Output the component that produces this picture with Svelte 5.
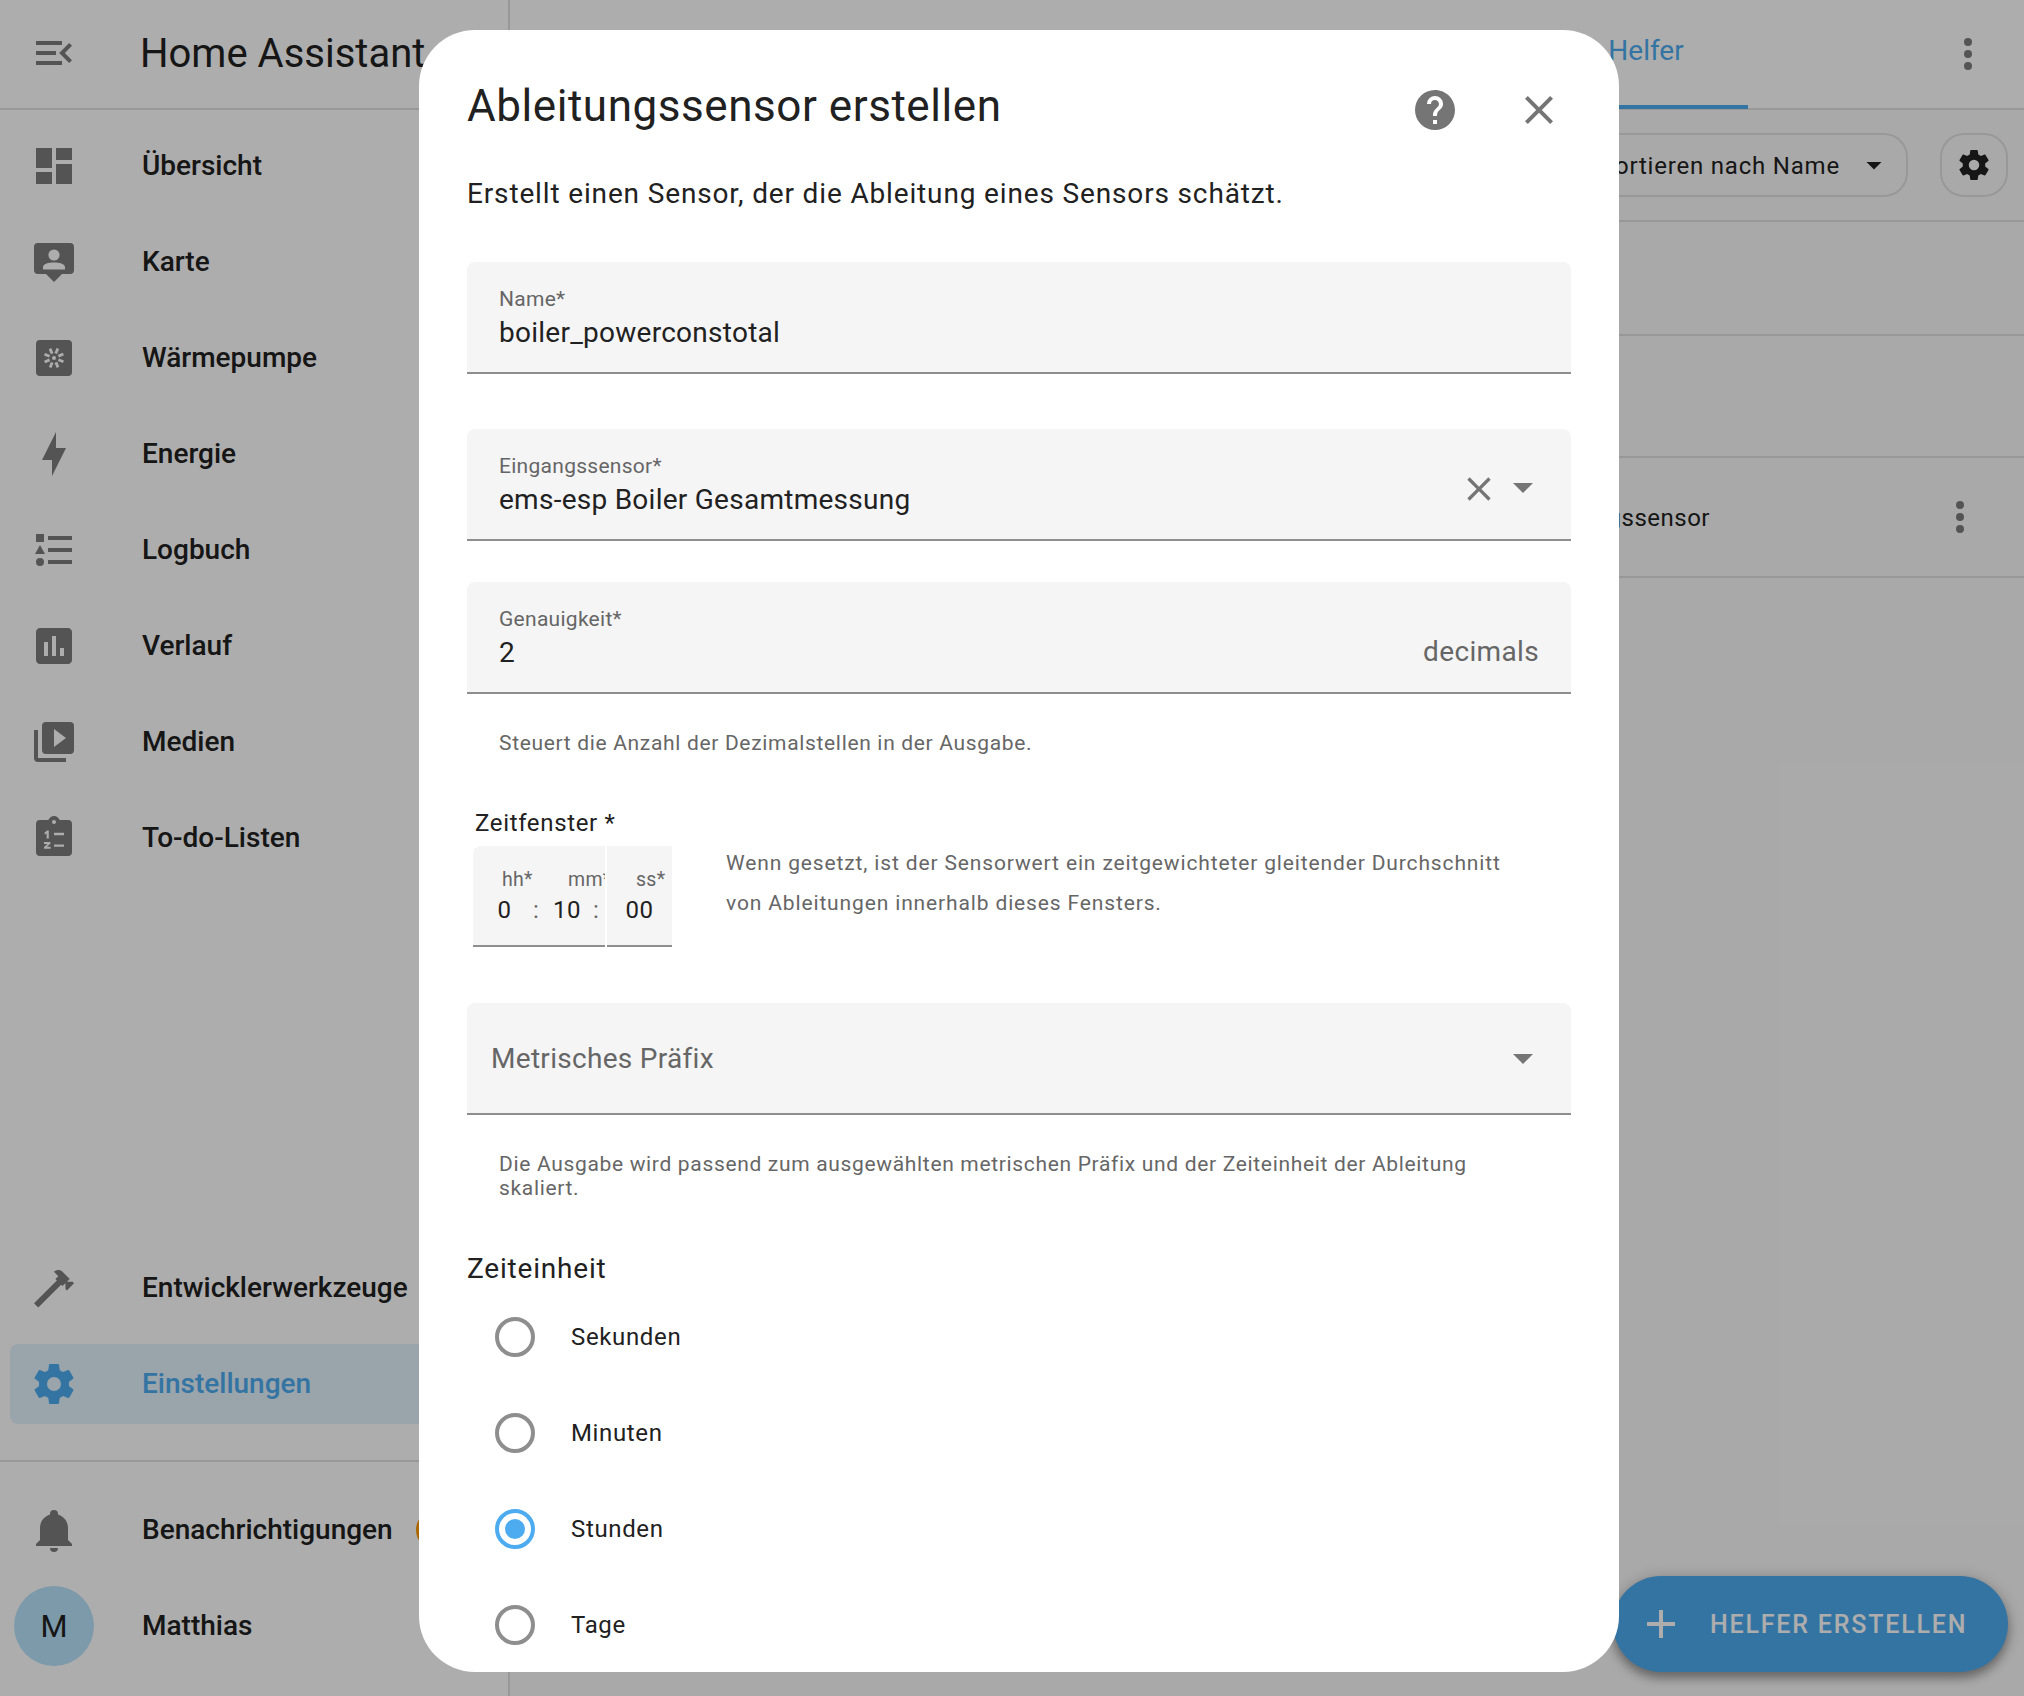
<script>
  const P = {
    menu: "M21,15.61L19.59,17L14.58,12L19.59,7L21,8.39L17.44,12L21,15.61M3,6H16V8H3V6M3,13V11H13V13H3M3,18V16H16V18H3Z",
    dash: "M13,3V9H21V3M13,21H21V11H13M3,21H11V15H3M3,13H11V3H3V13Z",
    map: "M4 2.5H20A2 2 0 0 1 22 4.5V16A2 2 0 0 1 20 18H16L12 22L8 18H4A2 2 0 0 1 2 16V4.5A2 2 0 0 1 4 2.5M12 5.7A2.8 2.8 0 1 0 12 11.3A2.8 2.8 0 1 0 12 5.7M6.5 15.7H17.5V14.6C17.5 13 14.6 12.3 12 12.3C9.4 12.3 6.5 13 6.5 14.6V15.7Z",
    bolt: "M11 15H6L13 1V9H18L11 23V15Z",
    log: "M5,9.5L7.5,14H2.5L5,9.5M3,4H7V8H3V4M5,20A2,2 0 0,0 7,18A2,2 0 0,0 5,16A2,2 0 0,0 3,18A2,2 0 0,0 5,20M9,5V7H21V5H9M9,19H21V17H9V19M9,13H21V11H9V13Z",
    chart: "M19 3H5C3.9 3 3 3.9 3 5V19C3 20.1 3.9 21 5 21H19C20.1 21 21 20.1 21 19V5C21 3.9 20.1 3 19 3M9 17H7V10H9V17M13 17H11V7H13V17M17 17H15V13H17V17Z",
    media: "M4,6H2V20A2,2 0 0,0 4,22H18V20H4V6M20,2H8A2,2 0 0,0 6,4V16A2,2 0 0,0 8,18H20A2,2 0 0,0 22,16V4A2,2 0 0,0 20,2M12,14.5V5.5L18,10L12,14.5Z",
    clip: "M19,3H14.82C14.4,1.84 13.3,1 12,1C10.7,1 9.6,1.84 9.18,3H5A2,2 0 0,0 3,5V19A2,2 0 0,0 5,21H19A2,2 0 0,0 21,19V5A2,2 0 0,0 19,3M12,3A1,1 0 0,1 13,4A1,1 0 0,1 12,5A1,1 0 0,1 11,4A1,1 0 0,1 12,3M7.3 9.2L8.6 8.3H9.4V12.2H8.3V9.7L7.3 10.2V9.2M12 9.4H17V10.6H12V9.4M7 14H10.2V14.9L8.4 16.4H10.3V17.4H7V16.5L8.8 15H7V14M12 15.2H17V16.4H12V15.2Z",
    ham: "M2 19.63L13.43 8.2L12.72 7.5L14.14 6.07L12 3.89C13.2 2.7 15.09 2.7 16.27 3.89L19.87 7.5L18.45 8.91H21.29L22 9.62L18.45 13.21L17.74 12.5V9.62L16.27 11.04L15.56 10.33L4.13 21.76L2 19.63Z",
    cog: "M12,15.5A3.5,3.5 0 0,1 8.5,12A3.5,3.5 0 0,1 12,8.5A3.5,3.5 0 0,1 15.5,12A3.5,3.5 0 0,1 12,15.5M19.43,12.97C19.47,12.65 19.5,12.33 19.5,12C19.5,11.67 19.47,11.34 19.43,11L21.54,9.37C21.73,9.22 21.78,8.95 21.66,8.73L19.66,5.27C19.54,5.05 19.27,4.96 19.05,5.05L16.56,6.05C16.04,5.66 15.5,5.32 14.87,5.07L14.5,2.42C14.46,2.18 14.25,2 14,2H10C9.75,2 9.54,2.18 9.5,2.42L9.13,5.07C8.5,5.32 7.96,5.66 7.44,6.05L4.95,5.05C4.73,4.96 4.46,5.05 4.34,5.27L2.34,8.73C2.21,8.95 2.27,9.22 2.46,9.37L4.57,11C4.53,11.34 4.5,11.67 4.5,12C4.5,12.33 4.53,12.65 4.57,12.97L2.46,14.63C2.27,14.78 2.21,15.05 2.34,15.27L4.34,18.73C4.46,18.95 4.73,19.03 4.95,18.95L7.44,17.94C7.96,18.34 8.5,18.68 9.13,18.93L9.5,21.58C9.54,21.82 9.75,22 10,22H14C14.25,22 14.46,21.82 14.5,21.58L14.87,18.93C15.5,18.67 16.04,18.34 16.56,17.94L19.05,18.95C19.27,19.03 19.54,18.95 19.66,18.73L21.66,15.27C21.78,15.05 21.73,14.78 21.54,14.63L19.43,12.97Z",
    bell: "M21,19V20H3V19L5,17V11C5,7.9 7.03,5.17 10,4.29C10,4.19 10,4.1 10,4A2,2 0 0,1 12,2A2,2 0 0,1 14,4C14,4.1 14,4.19 14,4.29C16.97,5.17 19,7.9 19,11V17L21,19M14,21A2,2 0 0,1 12,23A2,2 0 0,1 10,21",
    help: "M15.07,11.25L14.17,12.17C13.45,12.89 13,13.5 13,15H11V14.5C11,13.39 11.45,12.39 12.17,11.67L13.41,10.41C13.78,10.05 14,9.55 14,9C14,7.89 13.1,7 12,7A2,2 0 0,0 10,9H8A4,4 0 0,1 12,5A4,4 0 0,1 16,9C16,9.88 15.64,10.67 15.07,11.25M13,19H11V17H13M12,2A10,10 0 0,0 2,12A10,10 0 0,0 12,22A10,10 0 0,0 22,12C22,6.47 17.5,2 12,2Z",
    close: "M19,6.41L17.59,5L12,10.59L6.41,5L5,6.41L10.59,12L5,17.59L6.41,19L12,13.41L17.59,19L19,17.59L13.41,12L19,6.41Z",
    caret: "M7,10L12,15L17,10H7Z",
    dots: "M12,16A2,2 0 0,1 14,18A2,2 0 0,1 12,20A2,2 0 0,1 10,18A2,2 0 0,1 12,16M12,10A2,2 0 0,1 14,12A2,2 0 0,1 12,14A2,2 0 0,1 10,12A2,2 0 0,1 12,10M12,4A2,2 0 0,1 14,6A2,2 0 0,1 12,8A2,2 0 0,1 10,6A2,2 0 0,1 12,4Z",
    plus: "M19,13H13V19H11V13H5V11H11V5H13V11H19V13Z"
  };
  const topNav = [
    { t: "Übersicht", d: P.dash },
    { t: "Karte", d: P.map },
    { t: "Wärmepumpe", fan: true },
    { t: "Energie", d: P.bolt },
    { t: "Logbuch", d: P.log },
    { t: "Verlauf", d: P.chart },
    { t: "Medien", d: P.media },
    { t: "To-do-Listen", d: P.clip }
  ];
  const spokes = [0, 45, 90, 135, 180, 225, 270, 315];
  const radios = [
    { t: "Sekunden" },
    { t: "Minuten" },
    { t: "Stunden", on: true },
    { t: "Tage" }
  ];
</script>

{#snippet icon(d, size = 48, cls = "")}
  <svg class={cls} width={size} height={size} viewBox="0 0 24 24" fill="currentColor" fill-rule="evenodd"><path {d} /></svg>
{/snippet}

<div class="page">
  <aside class="sidebar">
    <div class="side-head">
      {@render icon(P.menu)}
      <span class="brand">Home Assistant</span>
    </div>
    <nav class="nav">
      {#each topNav as n}
        <div class="item">
          {#if n.fan}
            <svg width="48" height="48" viewBox="0 0 24 24">
              <rect x="3" y="3" width="18" height="18" rx="2" fill="currentColor" />
              <circle cx="12" cy="12" r="1" fill="#fff" />
              {#each spokes as a}
                <line x1="12" y1="9.6" x2="12" y2="6.9" stroke="#fff" stroke-width="1.4" transform="rotate({a + 22} 12 12)" />
              {/each}
            </svg>
          {:else}
            {@render icon(n.d)}
          {/if}
          <span>{n.t}</span>
        </div>
      {/each}
    </nav>
    <div class="bottom">
      <div class="item">{@render icon(P.ham)}<span>Entwicklerwerkzeuge</span></div>
      <div class="item active">{@render icon(P.cog)}<span>Einstellungen</span></div>
      <div class="rule"></div>
      <div class="item">
        {@render icon(P.bell)}<span>Benachrichtigungen</span>
        <i class="badge"></i>
      </div>
      <div class="item user">
        <div class="avatar">M</div><span>Matthias</span>
      </div>
    </div>
  </aside>

  <main class="main">
    <header class="tabs">
      <div class="tab">Helfer</div>
      {@render icon(P.dots, 48, "top-dots")}
    </header>
    <div class="toolbar">
      <div class="sort"><span>Sortieren nach Name</span>{@render icon(P.caret, 36)}</div>
      <div class="gear">{@render icon(P.cog, 36)}</div>
    </div>
    <div class="row r1"></div>
    <div class="row r2"></div>
    <div class="row r3">
      <span>Ableitungssensor</span>
      {@render icon(P.dots, 48, "row-dots")}
    </div>
    <div class="fab">{@render icon(P.plus)}<span>HELFER ERSTELLEN</span></div>
  </main>

  <div class="scrim"></div>

  <section class="dialog">
    <div class="dlg-head">
      <h2>Ableitungssensor erstellen</h2>
      <div class="actions">
        {@render icon(P.help)}
        {@render icon(P.close)}
      </div>
    </div>
    <p class="intro">Erstellt einen Sensor, der die Ableitung eines Sensors schätzt.</p>

    <div class="field f1">
      <div class="fbody"><span class="lbl">Name*</span><div class="val">boiler_powerconstotal</div></div>
    </div>

    <div class="field f2">
      <div class="fbody"><span class="lbl">Eingangssensor*</span><div class="val">ems-esp Boiler Gesamtmessung</div></div>
      <div class="f2-clear">{@render icon(P.close, 40)}</div>
      <div class="f2-caret">{@render icon(P.caret)}</div>
    </div>

    <div class="field f3">
      <div class="fbody"><span class="lbl">Genauigkeit*</span><div class="val">2</div></div>
      <span class="suffix">decimals</span>
    </div>
    <p class="help h3">Steuert die Anzahl der Dezimalstellen in der Ausgabe.</p>

    <div class="time-wrap">
      <div class="time-col">
        <div class="time-title">Zeitfenster *</div>
        <div class="time">
          <div class="seg seg-l">
            <div class="tc c-h"><small>hh*</small><b>0</b></div>
            <em>:</em>
            <div class="tc c-m"><small>mm*</small><b>10</b></div>
            <em>:</em>
          </div>
          <div class="seg seg-r">
            <div class="tc c-s"><small>ss*</small><b>00</b></div>
          </div>
        </div>
      </div>
      <p class="time-help">Wenn gesetzt, ist der Sensorwert ein zeitgewichteter gleitender Durchschnitt von Ableitungen innerhalb dieses Fensters.</p>
    </div>

    <div class="field f4">
      <span class="placeholder">Metrisches Präfix</span>
      <div class="f4-caret">{@render icon(P.caret)}</div>
    </div>
    <p class="help h4">Die Ausgabe wird passend zum ausgewählten metrischen Präfix und der Zeiteinheit der Ableitung skaliert.</p>

    <div class="unit-title">Zeiteinheit</div>
    <div class="radios">
      {#each radios as r}
        <div class="radio" class:on={r.on}><i></i><span>{r.t}</span></div>
      {/each}
    </div>
  </section>
</div>

<style>
  :global(body) { margin: 0; }
  .page {
    position: relative; width: 2024px; height: 1696px; overflow: hidden; display: flex;
    font-family: Roboto, "Liberation Sans", sans-serif; color: #212121; background: #fafafa;
  }
  .sidebar {
    width: 510px; flex: none; box-sizing: border-box; height: 1696px; background: #fff;
    border-right: 2px solid #e0e0e0; display: flex; flex-direction: column; color: #7c7c7c;
  }
  .side-head {
    height: 110px; box-sizing: border-box; flex: none; border-bottom: 2px solid #e0e0e0;
    display: flex; align-items: center; padding: 0 0 2px 30px; gap: 62px;
  }
  .brand { font-size: 40px; color: #212121; line-height: 48px; margin-top: 2px; }
  .nav { padding-top: 16px; }
  .item {
    position: relative; height: 80px; margin: 0 0 16px 10px; display: flex; align-items: center;
    padding-left: 20px; gap: 64px; border-radius: 8px; font-size: 28px; font-weight: 500;
  }
  .item span { color: #212121; white-space: nowrap; margin-top: -2px; }
  .active { background: rgba(77, 171, 240, .15); color: #4dabf0; margin-right: 8px; }
  .item.active span { color: #4dabf0; }
  .bottom { margin-top: auto; padding-bottom: 14px; }
  .rule { height: 2px; background: #e0e0e0; margin: 36px 0 28px; }
  .badge {
    position: absolute; left: 406px; top: 20px; width: 40px; height: 40px; border-radius: 50%; background: #ff9800;
  }
  .user { margin-bottom: 16px; padding-left: 4px; gap: 48px; }
  .avatar {
    width: 80px; height: 80px; border-radius: 50%; background: #b9e4fd; color: #212121;
    display: flex; align-items: center; justify-content: center; font-size: 31px; font-weight: 400;
  }

  .main { flex: 1; position: relative; min-width: 0; }
  .tabs {
    height: 110px; box-sizing: border-box; border-bottom: 2px solid #e0e0e0; display: flex;
    justify-content: flex-end; align-items: center; background: #fff; padding-right: 32px; color: #7c7c7c;
  }
  .tab {
    align-self: stretch; width: 202px; margin-right: 196px; box-sizing: border-box; border-bottom: 4px solid #4dabf0;
    margin-bottom: -1px; color: #4dabf0; font-size: 28px; display: flex; justify-content: center; padding: 33px 2px 0 0; line-height: 36px;
  }
  .toolbar {
    height: 112px; box-sizing: border-box; border-bottom: 2px solid #e0e0e0; display: flex;
    justify-content: flex-end; align-items: center; gap: 32px; padding: 0 16px 0 0;
  }
  .sort {
    height: 64px; box-sizing: border-box; border: 2px solid #e0e0e0; border-radius: 24px;
    display: flex; align-items: center; padding: 0 14px 0 40px; gap: 16px; font-size: 24px; letter-spacing: .8px; color: #212121;
  }
  .sort span { margin-top: 1px; }
  .gear {
    width: 68px; height: 64px; box-sizing: border-box; border: 2px solid #e0e0e0; border-radius: 24px;
    display: flex; align-items: center; justify-content: center; color: #212121;
  }
  .row { border-bottom: 2px solid #e0e0e0; box-sizing: border-box; }
  .r1 { height: 114px; }
  .r2 { height: 122px; }
  .r3 {
    height: 120px; display: flex; align-items: center; justify-content: flex-end; font-size: 24px; letter-spacing: .5px;
    padding-right: 40px; color: #212121;
  }
  .r3 span { margin-top: 2px; }
  .r3 :global(.row-dots) { margin-left: 226px; color: #7c7c7c; }
  .fab {
    position: absolute; right: 16px; bottom: 24px; height: 96px; width: 395px; box-sizing: border-box; border-radius: 48px;
    background: #4dabf0; color: #fff; display: flex; align-items: center; padding-left: 24px; gap: 25px;
    font-size: 25px; font-weight: 500; letter-spacing: 1.8px; box-shadow: 0 6px 10px rgba(0,0,0,.3), 0 2px 18px rgba(0,0,0,.2);
  }

  .scrim { position: absolute; inset: 0; background: rgba(0, 0, 0, .32); }

  .dialog {
    position: absolute; left: 419px; top: 30px; width: 1200px; height: 1642px; box-sizing: border-box; padding: 0 48px;
    background: #fff; border-radius: 56px; overflow: hidden; letter-spacing: .5px;
  }
  .dlg-head { height: 144px; box-sizing: border-box; display: flex; justify-content: space-between; padding-top: 44px; }
  h2 { margin: 0; font-size: 44px; font-weight: 400; line-height: 64px; letter-spacing: .55px; }
  .actions { display: flex; gap: 56px; margin: 12px 8px 0 0; color: #757575; align-self: flex-start; }
  .intro { margin: 0; font-size: 28px; line-height: 40px; letter-spacing: .85px; }
  .field {
    height: 112px; box-sizing: border-box; background: #f5f5f5; border-bottom: 2px solid #8e8e8e;
    border-radius: 8px 8px 0 0; display: flex; align-items: flex-start; padding-left: 32px; color: #757575;
  }
  .fbody { flex: 1; padding-top: 23px; }
  .lbl { display: block; font-size: 21px; line-height: 29px; color: #666; letter-spacing: .28px; }
  .val { font-size: 28px; line-height: 37px; color: #212121; letter-spacing: .26px; }
  .f1 { margin-top: 48px; }
  .f2 { margin-top: 55px; align-items: center; }
  .f2 .fbody { align-self: flex-start; }
  .f2-clear { display: flex; margin-top: 10px; }
  .f2-caret { display: flex; margin: 6px 24px 0 0; }
  .f3 { margin-top: 41px; }
  .suffix { font-size: 28px; line-height: 36px; color: #666; margin: 52px 32px 0 0; letter-spacing: .35px; }
  .help { margin: 0; padding: 0 32px; font-size: 21px; line-height: 24px; color: #666; letter-spacing: .67px; }
  .h3 { margin-top: 37px; }
  .time-wrap { display: flex; margin-top: 50px; }
  .time-col { margin-left: 6px; width: 199px; flex: none; }
  .time-title { font-size: 24px; line-height: 36px; margin-left: 2px; height: 36px; letter-spacing: .65px; }
  .time { display: flex; gap: 2px; margin-top: 5px; }
  .seg { background: #f5f5f5; border-bottom: 2px solid #8e8e8e; box-sizing: border-box; height: 101px; display: flex; overflow: hidden; }
  .seg-l { width: 132px; border-radius: 8px 0 0 0; }
  .seg-r { width: 65px; }
  .tc { flex: none; display: flex; flex-direction: column; padding-top: 21px; }
  .tc small { font-size: 19.5px; line-height: 26px; color: #666; padding-left: 29px; white-space: nowrap; letter-spacing: .3px; }
  .tc b { font-size: 24px; font-weight: 400; line-height: 34px; text-align: center; color: #212121; }
  .c-h { width: 60px; }
  .c-h b { padding-left: 3px; }
  .c-m { width: 54px; }
  .c-m b { padding-left: 2px; }
  .c-s { width: 65px; }
  em { font-style: normal; width: 6px; flex: none; font-size: 24px; color: #666; padding-top: 47px; line-height: 34px; text-align: center; }
  .time-help { margin: 38px 0 0 54px; width: 800px; font-size: 21px; line-height: 40px; color: #666; letter-spacing: .86px; align-self: flex-start; }
  .f4 { margin-top: 56px; align-items: center; padding-left: 24px; justify-content: space-between; }
  .placeholder { font-size: 28px; color: #666; letter-spacing: .3px; }
  .f4-caret { display: flex; margin-right: 24px; }
  .h4 { margin-top: 37px; }
  .unit-title { font-size: 28px; line-height: 40px; margin-top: 49px; letter-spacing: .8px; }
  .radios { display: flex; flex-direction: column; gap: 56px; margin-top: 28px; padding-left: 28px; }
  .radio { display: flex; align-items: center; height: 40px; gap: 36px; font-size: 24px; letter-spacing: .65px; }
  .radio i { width: 40px; height: 40px; box-sizing: border-box; border: 4px solid #8e8e8e; border-radius: 50%; position: relative; flex: none; }
  .radio.on i { border-color: #4dabf0; }
  .radio.on i::after { content: ""; position: absolute; inset: 6px; border-radius: 50%; background: #4dabf0; }
</style>
